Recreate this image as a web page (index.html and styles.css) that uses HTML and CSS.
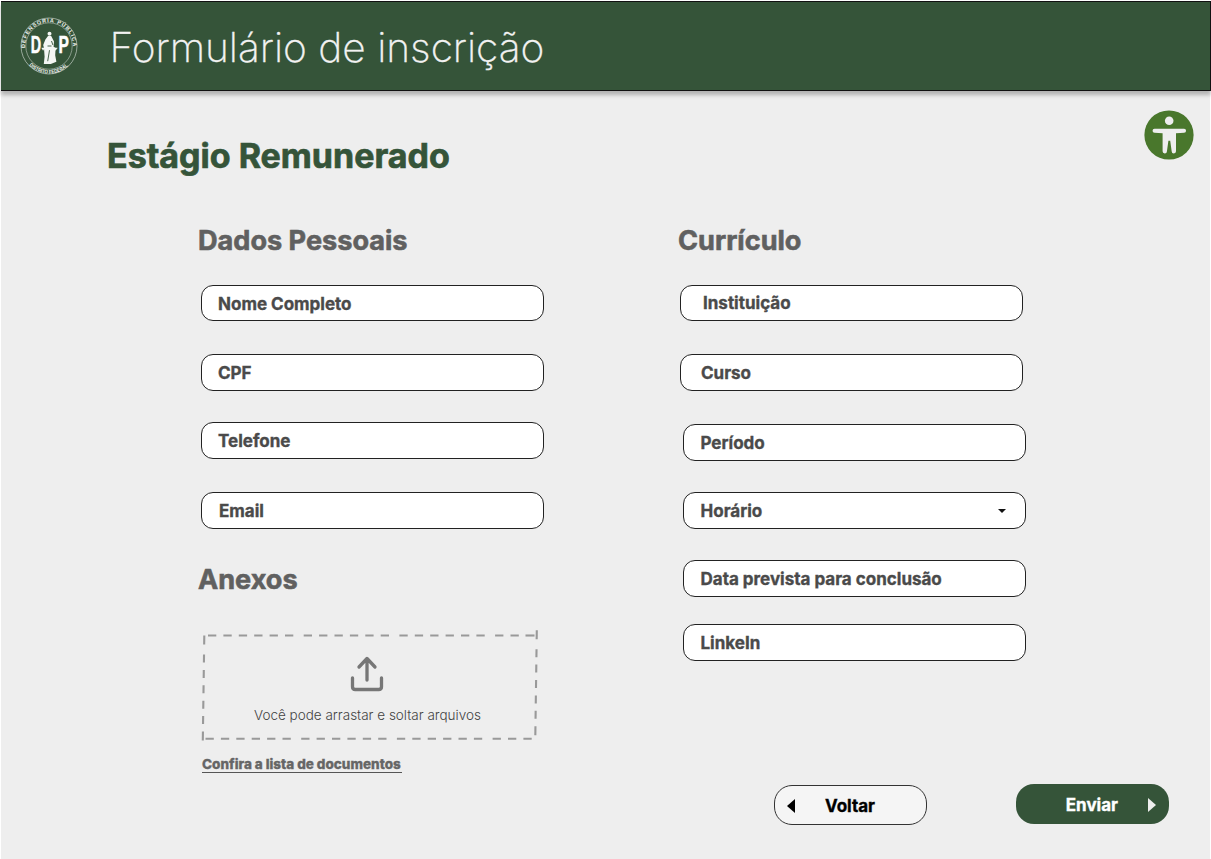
FILE: index.html
```html
<!DOCTYPE html>
<html lang="pt-BR">
<head>
<meta charset="utf-8">
<title>Formulário de inscrição</title>
<link rel="stylesheet" href="styles.css">
</head>
<body>
<div class="page">
  <header class="topbar">
    <svg class="logo" viewBox="0 0 60 60" width="60" height="60">
      <defs>
        <path id="arc-top" d="M6.6 35A23.9 23.9 0 1 1 53.4 35"/>
        <path id="arc-bottom" d="M10.2 49.4A27.8 27.8 0 0 0 49.8 49.4"/>
      </defs>
      <g fill="none" stroke="#e6ece7">
        <circle cx="30" cy="30" r="28" stroke-width=".8" opacity=".7"/>
        <circle cx="30" cy="30" r="23.2" stroke-width=".7" opacity=".65"/>
      </g>
      <text class="logo-ring"><textPath href="#arc-top" startOffset="3" textLength="77">DEFENSORIA PÚBLICA</textPath></text>
      <text class="logo-ring"><textPath href="#arc-bottom" startOffset="0" textLength="43" lengthAdjust="spacingAndGlyphs">DISTRITO FEDERAL</textPath></text>
      <text class="logo-letter" x="11.8" y="36.6" textLength="10.4" lengthAdjust="spacingAndGlyphs">D</text>
      <text class="logo-letter" x="39.4" y="36.6" textLength="10.4" lengthAdjust="spacingAndGlyphs">P</text>
      <g fill="#f4f6f4">
        <circle cx="30.5" cy="17.8" r="2"/>
        <path d="M29 20h3.2l2.8 5.5-.4 5.2 2 1.2-.4 7.4 1.2 6.5-5.6 2.2h-7l.8-7.2-.6-8.5-.8-3.2 2.2-5.6z"/>
        <path d="M22.5 31.8h16v.8h-16zM22.8 32.5h2.6l-1.3 2.2zM35.4 32.5H38l-1.3 2.2z"/>
      </g>
      <path d="M30.5 34.2l-1.8 11M32.5 25l1.4 4M28.5 30h4" stroke="#355439" stroke-width=".9" fill="none"/>
    </svg>
    <h1 class="topbar-title">Formulário de inscrição</h1>
  </header>

  <main class="content">
    <div class="intro">
      <h2 class="program">Estágio Remunerado</h2>
      <svg class="access" viewBox="0 0 50 50" width="50" height="50">
        <circle cx="25" cy="25" r="24.6" fill="#49772c"/>
        <g fill="#eee">
          <circle cx="25.2" cy="10.7" r="4.3"/>
          <path d="M10.5 18.8h29.6a1.8 1.8 0 0 1 0 3.9l-8.1.6v18a2 2 0 0 1-4.3.1l-1.5-10.6h-1.8L22.9 41.4a2 2 0 0 1-4.3-.1v-18l-8.1-.6a1.8 1.8 0 0 1 0-3.9z"/>
        </g>
      </svg>
    </div>

    <form class="columns">
      <section class="column">
        <h3 class="section-title personal">Dados Pessoais</h3>
        <div class="field name"><span>Nome Completo</span></div>
        <div class="field cpf"><span>CPF</span></div>
        <div class="field phone"><span>Telefone</span></div>
        <div class="field email"><span>Email</span></div>
        <h3 class="section-title attachments">Anexos</h3>
        <div class="dropzone">
          <svg class="dropzone-frame" viewBox="0 0 340 114" width="340" height="114">
            <g fill="none" stroke="#999" stroke-width="2.1">
              <path d="M8 6.5H323" stroke-dasharray="8.3 7.1 8.3 7.1 8.3 7.1 8.3 7.1 8.3 7.1 8.3 10.4"/>
              <path d="M325.5 6.5h9"/>
              <path d="M4.3 6.5L2.8 112" stroke-dasharray="9 10 8 7.4 8 7.4 8 7.4 8 7.4 8 7.4 9"/>
              <path d="M336.8 1.2L335.3 108" stroke-dasharray="9 10 8 7.4 8 7.4 8 7.4 8 7.4 8 7.4 9"/>
              <path d="M5.5 109.8H332" stroke-dasharray="8.3 7.1 8.3 7.1 8.3 7.1 8.3 7.1 8.3 7.1 8.3 10.4"/>
            </g>
          </svg>
          <svg class="upload" viewBox="0 0 34 36" width="34" height="36">
            <path d="M17 24V3M9 11l8-8.5 8 8.5M2.5 22v8.7q0 2.8 2.8 2.8h23.4q2.8 0 2.8-2.8V22" fill="none" stroke="#777" stroke-width="3.3" stroke-linecap="round" stroke-linejoin="round"/>
          </svg>
          <p class="hint"><span>Você pode arrastar e soltar arquivos</span></p>
        </div>
        <a class="documents">Confira a lista de documentos</a>
      </section>

      <section class="column">
        <h3 class="section-title resume">Currículo</h3>
        <div class="field school"><span>Instituição</span></div>
        <div class="field course"><span>Curso</span></div>
        <div class="field term shifted"><span>Período</span></div>
        <div class="field schedule shifted"><span>Horário</span>
          <svg viewBox="0 0 8 4" width="8" height="4"><path d="M0 0h8L4 4z" fill="#111"/></svg>
        </div>
        <div class="field finish shifted"><span>Data prevista para conclusão</span></div>
        <div class="field linkedin shifted"><span>LinkeIn</span></div>
      </section>
    </form>

    <div class="actions">
      <button class="button back"><svg viewBox="0 0 8 14" width="8" height="14"><path d="M8 0v14L0 7z" fill="#000"/></svg><span>Voltar</span></button>
      <button class="button send"><span>Enviar</span><svg viewBox="0 0 8 14" width="8" height="14"><path d="M0 0v14L8 7z" fill="#eee"/></svg></button>
    </div>
  </main>
</div>
</body>
</html>
```

FILE: styles.css
```css
* { box-sizing: border-box; }
body { margin: 0; background: #fff; font-family: Inter, "Liberation Sans", sans-serif; }
h1, h2, h3, p { margin: 0; }
svg { display: block; flex: none; }
.page { height: 859px; padding: 1px 0 0 1px; overflow: hidden; }
.topbar {
  position: relative;
  display: flex;
  height: 90px;
  width: 1210px;
  padding: 13.5px 0 0 18px;
  background: #355439;
  border: 1px solid #111;
  border-left-width: 0;
  box-shadow: 0 4px 4px rgba(0, 0, 0, .25);
}
.logo-ring { font: 700 5.4px "Liberation Sans", sans-serif; fill: #f0f3f0; }
.logo-letter { font: 700 23px "Liberation Sans", sans-serif; fill: #fff; stroke: #fff; stroke-width: .5px; }
.topbar-title { margin: 7.5px 0 0 30.5px; font-size: 40.65px; line-height: 49px; font-weight: 200; color: #f2f2f2; -webkit-text-stroke: .3px #f2f2f2; white-space: nowrap; }
.content { height: 768px; width: 1209px; background: #eee; }
.intro { display: flex; justify-content: space-between; padding: 18px 16.5px 0 106px; }
.program { margin-top: 26px; font-size: 34px; line-height: 42px; font-weight: 700; color: #355439; -webkit-text-stroke: .7px #355439; white-space: nowrap; }
.access { margin-top: 1px; }
.columns { display: grid; grid-template-columns: 479px 360px; height: 607px; padding: 47px 0 0 200px; }
.section-title { margin-left: -3px; height: 34px; font-size: 27.1px; line-height: 34px; font-weight: 700; color: #606060; -webkit-text-stroke: .6px #606060; white-space: nowrap; }
.resume { margin-left: -2px; }
.field {
  display: flex;
  align-items: center;
  justify-content: space-between;
  width: 343px;
  height: 37px;
  padding: 0 19px 0 16px;
  border: 1px solid #222;
  border-radius: 12px;
  background: #fff;
  color: #4a4a4a;
  font-size: 17px;
  font-weight: 700;
  -webkit-text-stroke: .35px #4a4a4a;
  white-space: nowrap;
}
.name, .school { margin-top: 27px; height: 36px; }
.name { padding-top: 1px; }
.cpf, .course { margin-top: 33px; }
.phone { margin-top: 31px; }
.email { margin-top: 33px; padding-left: 17px; }
.term { margin-top: 33px; }
.schedule { margin-top: 31px; }
.finish { margin-top: 31px; }
.linkedin { margin-top: 27px; }
.school { padding-left: 22px; }
.course { padding-left: 20px; }
.shifted { margin-left: 3px; padding-left: 16.5px; }
.attachments { margin-top: 34px; }
.dropzone { position: relative; height: 114px; width: 340px; margin: 32px 0 0 -1px; padding-top: 26.5px; }
.dropzone-frame { position: absolute; left: 0; top: 0; }
.upload { margin: 0 auto 0 150px; }
.hint { margin: 13.5px 0 0 54px; font-size: 13.5px; line-height: 20px; font-weight: 300; color: #444; white-space: nowrap; }
.documents { display: block; width: 200px; height: 17px; margin: 13px 0 0 1px; border-bottom: 1px solid #555; font-size: 13.5px; line-height: 17px; font-weight: 800; color: #666; -webkit-text-stroke: .3px #666; white-space: nowrap; }
.actions { display: flex; gap: 89px; padding-left: 773px; }
.button { display: flex; align-items: center; width: 153px; height: 40px; padding: 1px 13px 0 12px; border-radius: 18px; font: 700 17px Inter, "Liberation Sans", sans-serif; -webkit-text-stroke: .35px; }
.back { margin-top: 1px; gap: 30px; border: 1px solid #333; background: #f5f5f5; color: #000; }
.send { justify-content: flex-end; gap: 30px; border: 0; background: #355439; color: #fff; }
```
